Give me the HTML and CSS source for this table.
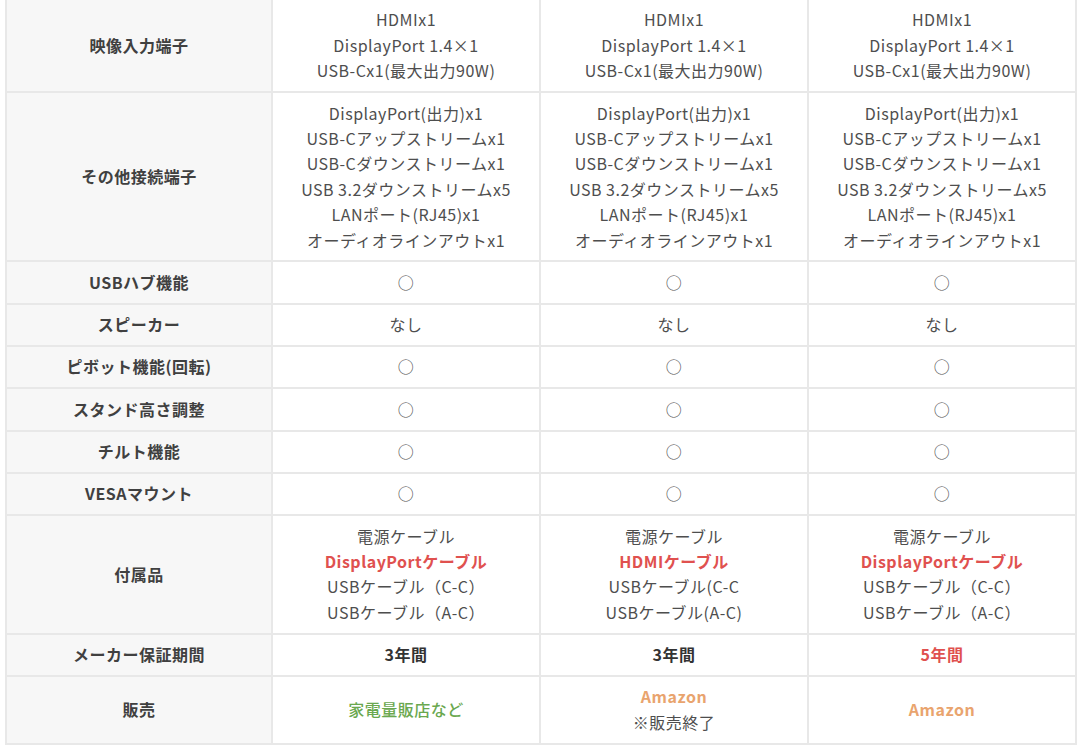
FILE: index.html
```html
<!DOCTYPE html>
<html lang="ja">
<head>
<meta charset="utf-8">
<link rel="stylesheet" href="styles.css">
</head>
<body>
<table class="spec">
  <colgroup>
    <col class="c-head"><col class="c-data"><col class="c-data"><col class="c-data">
  </colgroup>
  <tbody>
    <tr>
      <th>映像入力端子</th>
      <td>HDMIx1<br>DisplayPort 1.4×1<br>USB-Cx1(最大出力90W)</td>
      <td>HDMIx1<br>DisplayPort 1.4×1<br>USB-Cx1(最大出力90W)</td>
      <td>HDMIx1<br>DisplayPort 1.4×1<br>USB-Cx1(最大出力90W)</td>
    </tr>
    <tr>
      <th>その他接続端子</th>
      <td>DisplayPort(出力)x1<br>USB-Cアップストリームx1<br>USB-Cダウンストリームx1<br>USB 3.2ダウンストリームx5<br>LANポート(RJ45)x1<br>オーディオラインアウトx1</td>
      <td>DisplayPort(出力)x1<br>USB-Cアップストリームx1<br>USB-Cダウンストリームx1<br>USB 3.2ダウンストリームx5<br>LANポート(RJ45)x1<br>オーディオラインアウトx1</td>
      <td>DisplayPort(出力)x1<br>USB-Cアップストリームx1<br>USB-Cダウンストリームx1<br>USB 3.2ダウンストリームx5<br>LANポート(RJ45)x1<br>オーディオラインアウトx1</td>
    </tr>
    <tr><th>USBハブ機能</th><td>○</td><td>○</td><td>○</td></tr>
    <tr><th>スピーカー</th><td>なし</td><td>なし</td><td>なし</td></tr>
    <tr><th>ピボット機能(回転)</th><td>○</td><td>○</td><td>○</td></tr>
    <tr><th>スタンド高さ調整</th><td>○</td><td>○</td><td>○</td></tr>
    <tr><th>チルト機能</th><td>○</td><td>○</td><td>○</td></tr>
    <tr><th>VESAマウント</th><td>○</td><td>○</td><td>○</td></tr>
    <tr>
      <th>付属品</th>
      <td>電源ケーブル<br><span class="red">DisplayPortケーブル</span><br>USBケーブル（C-C）<br>USBケーブル（A-C）</td>
      <td>電源ケーブル<br><span class="red">HDMIケーブル</span><br>USBケーブル(C-C<br>USBケーブル(A-C)</td>
      <td>電源ケーブル<br><span class="red">DisplayPortケーブル</span><br>USBケーブル（C-C）<br>USBケーブル（A-C）</td>
    </tr>
    <tr>
      <th>メーカー保証期間</th>
      <td><span class="bold">3年間</span></td>
      <td><span class="bold">3年間</span></td>
      <td><span class="red">5年間</span></td>
    </tr>
    <tr class="tall">
      <th>販売</th>
      <td><span class="green">家電量販店など</span></td>
      <td><span class="orange">Amazon</span><br>※販売終了</td>
      <td><span class="orange">Amazon</span></td>
    </tr>
  </tbody>
</table>
</body>
</html>
```

FILE: styles.css
```css
html, body {
  margin: 0;
  padding: 0;
  background: #ffffff;
}

body {
  font-family: "Noto Sans CJK JP", "Noto Sans", sans-serif;
  font-size: 16px;
  color: #4e4e4e;
}

.spec {
  margin: -2px 0 0 5px;
  width: 1071px;
  border-collapse: collapse;
  table-layout: fixed;
}

.c-head { width: 266px; }
.c-data { width: 268px; }

.spec th,
.spec td {
  border: 2px solid #e8e8e8;
  text-align: center;
  vertical-align: middle;
  padding: 7.45px 4px;
  line-height: 25.4px;
  letter-spacing: 0.5px;
}

.spec th {
  background: #f7f7f7;
  font-weight: 700;
  color: #404040;
}

.spec td {
  background: #ffffff;
  font-weight: 400;
}

.spec .tall th,
.spec .tall td {
  height: 51px;
}

.red {
  color: #e0514f;
  font-weight: 700;
}

.bold {
  color: #333333;
  font-weight: 700;
}

.green {
  color: #6aa84f;
  font-weight: 500;
}

.orange {
  color: #e9a46e;
  font-weight: 700;
}
```
